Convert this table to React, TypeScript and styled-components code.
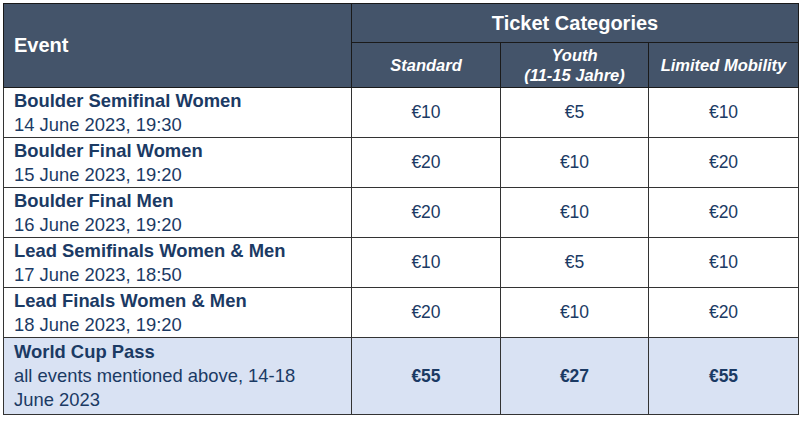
import React from "react";
import styled, { createGlobalStyle } from "styled-components";

const Global = createGlobalStyle`
  html, body { margin: 0; padding: 0; background: #ffffff; }
  body { font-family: "Liberation Sans", Arial, sans-serif; }
`;

const Page = styled.div`
  padding: 3px 0 0 3px;
`;

const Table = styled.table`
  border-collapse: collapse;
  table-layout: fixed;
  width: 795px;
  border: 1px solid #222;
`;

const HeadCell = styled.th<{ $h?: number; $align?: string }>`
  background: #44546a;
  color: #ffffff;
  border: 1px solid #1a1a1a;
  font-weight: bold;
  font-size: 20px;
  text-align: ${(p) => p.$align || "center"};
  padding: 0 10px;
  height: ${(p) => p.$h || 38}px;
  vertical-align: middle;
`;

const SubHead = styled.th`
  background: #44546a;
  color: #ffffff;
  border: 1px solid #1a1a1a;
  font-weight: bold;
  font-style: italic;
  font-size: 16.5px;
  line-height: 20px;
  text-align: center;
  padding: 0 2px;
  height: 44px;
  vertical-align: middle;
`;

const Row = styled.tr<{ $pass?: boolean }>`
  background: ${(p) => (p.$pass ? "#d9e2f3" : "#ffffff")};
`;

const EventCell = styled.td<{ $h: number }>`
  border: 1px solid #333;
  padding: 0 30px 0 10px;
  height: ${(p) => p.$h}px;
  vertical-align: middle;
  color: #1b3a64;
  font-size: 18.4px;
  line-height: 24px;
`;

const Title = styled.div`
  font-weight: bold;
`;

const Sub = styled.div`
  font-weight: normal;
`;

const Price = styled.td<{ $bold?: boolean }>`
  border: 1px solid #333;
  text-align: center;
  vertical-align: middle;
  color: #1b3a64;
  font-size: 17.5px;
  font-weight: ${(p) => (p.$bold ? "bold" : "normal")};
`;

const rows = [
  { t: "Boulder Semifinal Women", d: "14 June 2023, 19:30", p: ["€10", "€5", "€10"] },
  { t: "Boulder Final Women", d: "15 June 2023, 19:20", p: ["€20", "€10", "€20"] },
  { t: "Boulder Final Men", d: "16 June 2023, 19:20", p: ["€20", "€10", "€20"] },
  { t: "Lead Semifinals Women & Men", d: "17 June 2023, 18:50", p: ["€10", "€5", "€10"] },
  { t: "Lead Finals Women & Men", d: "18 June 2023, 19:20", p: ["€20", "€10", "€20"] },
];

export default function App() {
  return (
    <>
      <Global />
      <Page>
        <Table>
          <colgroup>
            <col style={{ width: 348 }} />
            <col style={{ width: 149 }} />
            <col style={{ width: 148 }} />
            <col style={{ width: 150 }} />
          </colgroup>
          <thead>
            <tr>
              <HeadCell rowSpan={2} $align="left">Event</HeadCell>
              <HeadCell colSpan={3} $h={38}>Ticket Categories</HeadCell>
            </tr>
            <tr>
              <SubHead>Standard</SubHead>
              <SubHead>
                Youth
                <br />
                (11-15 Jahre)
              </SubHead>
              <SubHead>Limited Mobility</SubHead>
            </tr>
          </thead>
          <tbody>
            {rows.map((r) => (
              <Row key={r.t}>
                <EventCell $h={49}>
                  <Title>{r.t}</Title>
                  <Sub>{r.d}</Sub>
                </EventCell>
                {r.p.map((v, i) => (
                  <Price key={i}>{v}</Price>
                ))}
              </Row>
            ))}
            <Row $pass>
              <EventCell $h={76}>
                <Title>World Cup Pass</Title>
                <Sub>all events mentioned above, 14-18 June 2023</Sub>
              </EventCell>
              <Price $bold>€55</Price>
              <Price $bold>€27</Price>
              <Price $bold>€55</Price>
            </Row>
          </tbody>
        </Table>
      </Page>
    </>
  );
}
